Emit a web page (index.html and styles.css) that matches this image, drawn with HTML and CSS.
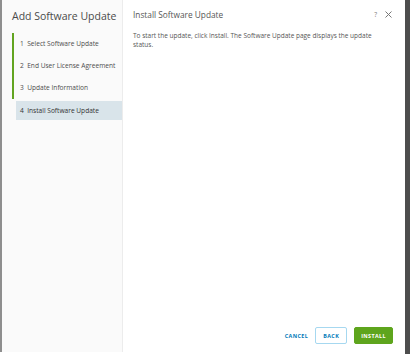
FILE: index.html
```html
<!DOCTYPE html>
<html lang="en">
<head>
    <meta charset="UTF-8">
    <meta name="viewport" content="width=device-width, initial-scale=1.0">
    <title>Add Software Update</title>
    <link rel="stylesheet" href="styles.css">
</head>
<body>
    <div class="wizard">
        <div class="sidebar">
            <h2 class="wizard-title">Add Software Update</h2>
            <ul class="steps">
                <li class="step done">1&nbsp; Select Software Update</li>
                <li class="step done">2&nbsp; End User License Agreement</li>
                <li class="step done">3&nbsp; Update Information</li>
                <li class="step active">4&nbsp; Install Software Update</li>
            </ul>
        </div>
        <div class="content">
            <div class="content-header">
                <h3>Install Software Update</h3>
                <div class="header-actions">
                    <span class="help">?</span>
                    <svg class="close" width="7" height="7" viewBox="0 0 7 7">
                        <path d="M0.5 0.5 L6.5 6.5 M6.5 0.5 L0.5 6.5" stroke="#777" stroke-width="1"/>
                    </svg>
                </div>
            </div>
            <p class="content-text">To start the update, click Install. The Software Update page displays the update status.</p>
            <div class="footer">
                <button class="btn btn-link">CANCEL</button>
                <button class="btn btn-outline">BACK</button>
                <button class="btn btn-success">INSTALL</button>
            </div>
        </div>
    </div>
    <div class="frame-edge"></div>
</body>
</html>
```

FILE: styles.css
```css
body {
    font-family: "Open Sans", "Noto Sans", sans-serif;
    margin: 0;
    height: 354px;
    display: flex;
    background: #fff;
    color: #565656;
}
.wizard {
    flex: 1;
    display: flex;
    border-left: 2px solid #8e8e8e;
    height: 352px;
}
.frame-edge {
    width: 5px;
    background: #4d4d4d;
}

/* Sidebar */
.sidebar {
    width: 121px;
    background: #fafafa;
    border-right: 1px solid #ececec;
    padding-top: 9px;
    box-sizing: border-box;
}
.wizard-title {
    margin: 0 0 0 10px;
    font-size: 10.5px;
    line-height: 15px;
    font-weight: 400;
    color: #4a4a4a;
    white-space: nowrap;
}
.steps {
    list-style: none;
    margin: 9px 0 0 10px;
    padding: 0;
}
.step {
    height: 22px;
    line-height: 22px;
    font-size: 6.6px;
    color: #4d4d4d;
    padding-left: 6px;
    border-left: 2px solid transparent;
    white-space: nowrap;
}
.step.done {
    border-left-color: #62a420;
}
.step.active {
    margin: 2px 0 0 4px;
    padding-left: 4px;
    border-left: none;
    background: #d9e4ea;
    height: 19px;
    line-height: 19px;
    color: #333;
}

/* Content */
.content {
    flex: 1;
    display: flex;
    flex-direction: column;
    padding: 9px 10px 8px 10px;
}
.content-header {
    display: flex;
    justify-content: space-between;
    align-items: center;
}
.content-header h3 {
    margin: 0;
    font-size: 8.3px;
    font-weight: 400;
    color: #565656;
}
.header-actions {
    display: flex;
    align-items: center;
    gap: 8px;
    padding-right: 3px;
}
.help {
    font-size: 6.5px;
    color: #777;
}
.content-text {
    margin: 12px 0 0 0;
    font-size: 6.5px;
    line-height: 8.5px;
    color: #565656;
    padding-right: 6px;
}
.footer {
    margin-top: auto;
    display: flex;
    justify-content: flex-end;
    align-items: center;
    gap: 7px;
    padding-right: 2px;
}
.btn {
    font-family: inherit;
    font-size: 5.4px;
    font-weight: 700;
    letter-spacing: 0.4px;
    height: 17px;
    border-radius: 2px;
    padding: 0 6px;
    cursor: pointer;
}
.btn-link {
    background: none;
    border: none;
    color: #0079b8;
    padding: 0;
}
.btn-outline {
    background: #fff;
    border: 1px solid #a6d8f0;
    color: #0079b8;
    padding: 0 7px;
}
.btn-success {
    background: #5ea51d;
    border: 1px solid #5ea51d;
    color: #fff;
}
```
